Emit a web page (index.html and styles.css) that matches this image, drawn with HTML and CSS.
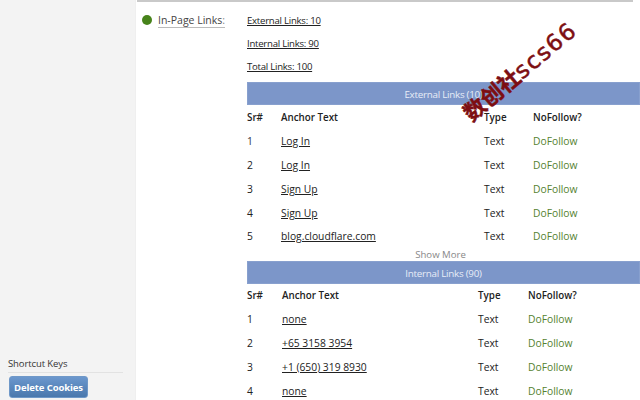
FILE: index.html
```html
<!DOCTYPE html>
<html lang="en">
<head>
<meta charset="utf-8">
<title>In-Page Links</title>
<link rel="stylesheet" href="styles.css">
</head>
<body>
<div class="page">
  <aside class="sidebar">
    <div class="shortcut">Shortcut Keys</div>
    <button class="delete">Delete Cookies</button>
  </aside>
  <main class="main">
    <div class="topline"></div>
    <section class="report">
      <div class="label-col">
        <span class="dot"></span>
        <span class="label">In-Page Links<span class="colon">:</span></span>
      </div>
      <div class="content">
        <p class="stat">External Links: 10</p>
        <p class="stat">Internal Links: 90</p>
        <p class="stat">Total Links: 100</p>
        <div class="bar">External Links (10)</div>
        <table class="links ext">
          <tr class="head"><th class="c1">Sr#</th><th class="c2">Anchor Text</th><th class="c3">Type</th><th>NoFollow?</th></tr>
          <tr><td class="num">1</td><td><u>Log In</u></td><td>Text</td><td class="df">DoFollow</td></tr>
          <tr><td>2</td><td><u>Log In</u></td><td>Text</td><td class="df">DoFollow</td></tr>
          <tr><td>3</td><td><u>Sign Up</u></td><td>Text</td><td class="df">DoFollow</td></tr>
          <tr><td>4</td><td><u>Sign Up</u></td><td>Text</td><td class="df">DoFollow</td></tr>
          <tr class="last"><td>5</td><td><u>blog.cloudflare.com</u></td><td>Text</td><td class="df">DoFollow</td></tr>
        </table>
        <div class="more">Show More</div>
        <div class="bar">Internal Links (90)</div>
        <table class="links int">
          <tr class="head"><th class="c1">Sr#</th><th class="c2">Anchor Text</th><th class="c3">Type</th><th>NoFollow?</th></tr>
          <tr><td>1</td><td><u>none</u></td><td>Text</td><td class="df">DoFollow</td></tr>
          <tr><td>2</td><td><u>+65 3158 3954</u></td><td>Text</td><td class="df">DoFollow</td></tr>
          <tr><td>3</td><td><u>+1 (650) 319 8930</u></td><td>Text</td><td class="df">DoFollow</td></tr>
          <tr><td>4</td><td><u>none</u></td><td>Text</td><td class="df">DoFollow</td></tr>
        </table>
      </div>
    </section>
  </main>
</div>
<div class="watermark"><span class="wm-cjk">数创社</span>scs66</div>
</body>
</html>
```
FILE: styles.css
```css
* { box-sizing: border-box; }
html, body { margin: 0; height: 400px; overflow: hidden; background: #fff; }
body { font-family: "Open Sans", "Noto Sans CJK SC", sans-serif; font-size: 10.3px; color: #222; }
.page { display: flex; width: 640px; height: 400px; }
.sidebar { width: 136px; flex: none; background: #f3f3f3; border-right: 1px solid #efefef; display: flex; flex-direction: column; justify-content: flex-end; padding: 0 12px 2px 9px; }
.shortcut { font-size: 9.5px; letter-spacing: -0.1px; color: #333; line-height: 14px; padding-bottom: 1px; margin-left: -1px; border-bottom: 1px solid #e2e2e2; margin-bottom: 3px; }
.delete { width: 79px; height: 22px; padding: 0; border: 1px solid #6f98c8; border-radius: 3px; background: linear-gradient(#6b97cd, #4a78ad); color: #fff; font: 700 9.5px "Open Sans", sans-serif; letter-spacing: -0.1px; }
.main { flex: 1; min-width: 0; }
.topline { height: 2px; width: 496px; margin-left: 1px; background: #c9c9c9; }
.report { display: flex; padding-top: 11px; }
.label-col { width: 111px; flex: none; display: flex; align-items: flex-start; padding-left: 6px; }
.dot { width: 10px; height: 10px; border-radius: 50%; background: #47831b; margin: 2px 6px 0 0; }
.label { font-size: 10.5px; line-height: 14px; color: #444; border-bottom: 1px solid #bbb; }
.colon { color: #888; }
.content { width: 393px; flex: none; }
.stat { margin: 0 0 9px; height: 14px; font-size: 9.6px; letter-spacing: -0.25px; line-height: 16px; text-decoration: underline; color: #222; }
.bar { height: 23px; line-height: 23px; background: #7c96c9; border: 1px solid #88a0ce; color: #e8edf7; text-align: center; font-size: 9.8px; letter-spacing: -0.25px; width: 393px; }
.links { width: 393px; border-collapse: collapse; table-layout: fixed; }
.links td, .links th { padding: 0; height: 24px; text-align: left; font-weight: 400; }
.links th { font-weight: 600; font-size: 9.8px; color: #222; }
.links .last td { height: 23px; padding-bottom: 1px; }
.int th { height: 23px; padding-bottom: 1px; }
.ext .c1 { width: 34px; } .ext .c2 { width: 203px; } .ext .c3 { width: 49px; }
.int .c1 { width: 35px; } .int .c2 { width: 196px; } .int .c3 { width: 50px; }
.num { color: #334; }
.df { color: #55822f; }
.more { height: 13px; line-height: 13px; padding-right: 6px; text-align: center; color: #888; font-size: 9.6px; }
.watermark { position: absolute; left: 449px; top: 54px; font: 400 23px "DejaVu Sans", sans-serif; letter-spacing: 1.5px; color: #7d0e12; -webkit-text-stroke: 0.5px #7d0e12; transform: rotate(-40deg); white-space: nowrap; }
.wm-cjk { font: 700 22px "Noto Sans CJK SC", sans-serif; letter-spacing: 0; }
```
